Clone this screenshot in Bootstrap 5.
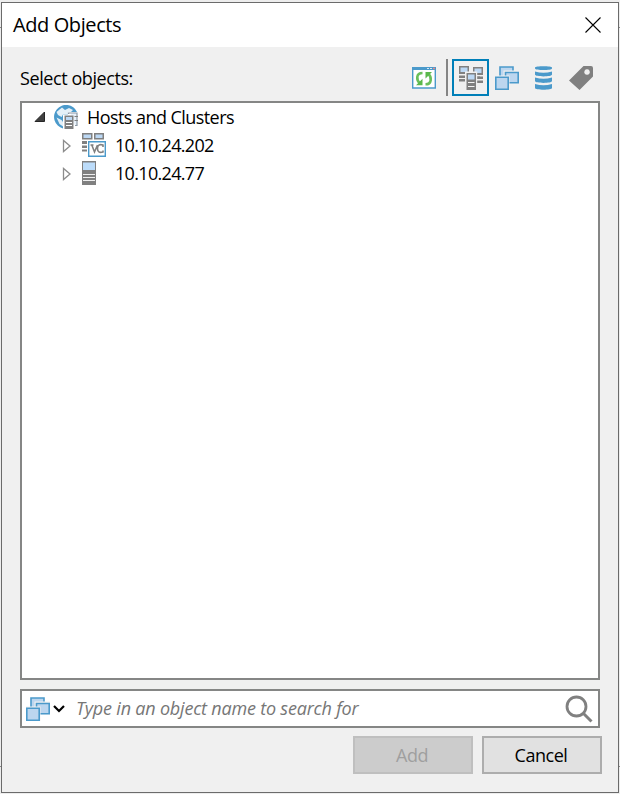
<!DOCTYPE html>
<html lang="en">
<head>
<meta charset="utf-8">
<meta name="viewport" content="width=device-width, initial-scale=1">
<title>Add Objects</title>
<link href="https://cdn.jsdelivr.net/npm/bootstrap@5.3.0/dist/css/bootstrap.min.css" rel="stylesheet">
<style>
html,body{height:100%}
body{font-family:"Open Sans","Noto Sans",sans-serif;font-size:18px;line-height:28px;color:#000;padding:2px 1px 1px;overflow:hidden;
background:linear-gradient(#ededed 27px,#8a8a8a 27px,#8a8a8a 28px,#ededed 28px,#ededed 766px,#8a8a8a 766px,#8a8a8a 767px,#ededed 767px)}
svg{display:block;flex:none}
.dialog{height:791px;background:#f0f0f0;border:1px solid #6b6b6b}
.titlebar{height:44px;padding:0 16px 0 11px}
.title{font-size:20px;letter-spacing:-.4px;padding-bottom:1px}
.close-x{background:none;border:0;padding:0 1px 1px 0}
.tools{height:54px;padding:12px 19px 0 18px}
.prompt{letter-spacing:-.42px;padding-top:5px}
.tool{width:37px;height:37px;border:2px solid transparent;background:none;padding:0}
.tool.active{border-color:#007fb8;margin-right:-1px}
.rule{width:2px;height:37px;background:#858585}
.frame{border:2px solid #858685;background:#fff;margin:0 18px}
.tree{height:579px;padding:0 0 0 12px;margin-bottom:9px}
.tree-row{height:28px}
.node{margin-left:9px;letter-spacing:-.56px}
.child{padding-left:27px}
.child .node{letter-spacing:-.68px}
.finder{height:39px;margin-bottom:8px;padding:0 5px 0 4px}
.finder input{border:0;outline:0;padding:0 0 2px;margin-left:9px;background:none;font-style:italic;letter-spacing:-.2px;min-width:0}
.finder input::placeholder{color:#767676;opacity:1}
.actions{padding-right:16px;gap:9px}
.cmd{width:120px;height:38px;border:2px solid #adadad;background:#e1e1e1;padding:0 2px 0 0;letter-spacing:-.45px;color:#000}
.cmd:disabled{background:#ccc;border-color:#bfbfbf;color:#9f9f9f}
</style>
</head>
<body>
<svg width="0" height="0" class="position-absolute" aria-hidden="true">
<defs>
<g id="vms">
<path d="M5 1h13v11H5z" fill="#bcd6ef" stroke="#4b9acb" stroke-width="1.6"/>
<path d="M8.500 4.500h16v13h-16z" fill="#f0f0f0"/>
<path d="M10.500 6.500h12.700v10.200H10.500z" fill="#bcd6ef" stroke="#4b9acb" stroke-width="1.6"/>
<path d="M-.5 9.500h15v15h-15z" fill="#f0f0f0"/>
<path d="M.8 11.200h12.400v12H.8z" fill="#bcd6ef" stroke="#4b9acb" stroke-width="1.6"/>
</g>
<g id="server"><path d="M0 0h10v8H0zM0 9.500h7V12H0zM0 13h7v2.500H0z" fill="#808080"/><path d="M1.500 1.500h7V6h-7z" fill="#bcd8f4"/></g>
</defs>
</svg>
<main class="dialog">
<header class="titlebar bg-white d-flex align-items-center justify-content-between">
<span class="title">Add Objects</span>
<button class="close-x" aria-label="Close"><svg width="16" height="16"><path d="M.5.5l15 15M15.500.5l-15 15" stroke="#000" stroke-width="1.1"/></svg></button>
</header>
<div class="tools d-flex align-items-start">
<span class="prompt me-auto">Select objects:</span>
<button class="tool d-flex align-items-center justify-content-center me-1" aria-label="Refresh"><svg width="24" height="22"><path d="M.7 1h22.600v20H.7z" fill="#fff" stroke="#4b9acb" stroke-width="1.4"/><path d="M0 0h24v3H0z" fill="#4b9acb"/><path d="M15 1.500h2M18 1.500h2" stroke="#d8e9f5"/><path d="M21 1.500h2" stroke="#e58787" stroke-width="1.5"/><path d="M10.500 6C4 6 4 13 8 16.500M13.500 17.300C20 17.300 20 10 16 6.500" fill="none" stroke="#6abf5b" stroke-width="2.600"/><path d="M4 18.300h6.500v-6.500zM13.500 5h6.500l-6.500 6.500z" fill="#5ab84b"/></svg></button>
<span class="rule me-1"></span>
<button class="tool active d-flex align-items-center justify-content-center" aria-label="Hosts"><svg width="24" height="24"><use href="#server"/><use href="#server" x="14" y="1"/><path d="M14 11h10v5.500H14z" fill="#f0f0f0"/><path d="M17 10.500h7V13h-7zM17 14.500h7V17h-7z" fill="#808080"/><path d="M6 5.500h12.200V24H6z" fill="#f0f0f0"/><path d="M7.500 7H17v17H7.500z" fill="#808080"/><path d="M9 8.500h6.500v5H9z" fill="#bcd8f4"/><path d="M9 16.500h6.500M9 20.500h6.500" stroke="#f5f5f5"/></svg></button>
<button class="tool d-flex align-items-center justify-content-center" aria-label="Virtual machines"><svg width="24" height="24"><use href="#vms"/></svg></button>
<button class="tool d-flex align-items-center justify-content-center" aria-label="Datastores"><svg width="18" height="24" fill="#4b9acb"><path d="M0 1.500C0-.2 17-.2 17 1.500V2.500C17 4.500 0 4.500 0 2.500zM0 5.500Q8.500 8 17 5.500V8.500C17 11 0 11 0 8.500zM0 11.500Q8.500 14 17 11.500V15C17 17.500 0 17.500 0 15zM0 18Q8.500 20.500 17 18V22C17 24.300 0 24.300 0 22z"/></svg></button>
<button class="tool d-flex align-items-center justify-content-center" aria-label="Tags"><svg width="24" height="24"><path fill-rule="evenodd" d="M14.500 0H22q2 0 2 2v8.500L10.500 24 0 14.500zM18 3.200a2.800 2.800 0 1 0 .1 0z" fill="#808080"/></svg></button>
</div>
<section class="frame tree">
<div class="tree-row d-flex align-items-center"><svg class="me-2" width="12" height="12"><path d="M10.500 1v9.500H1z" fill="#404040" stroke="#262626"/></svg>
<svg width="24" height="24"><path d="M23 7A12 12 0 1 0 9 23.500V9.500h5V7z" fill="#4b9acb"/><path d="M8 2.500l3 2.500 4-2 4 2-2 2h-3v2.500H9L7.500 12 4 10 2.500 7zM2.500 12.500l5 2.500 1.500 2v4.500L5.500 19z" fill="#e4f0f8"/><path d="M16.500 8h6.500v12.500h-2M14.500 9V8h2" fill="#e8f1fa" stroke="#8b98a5" stroke-width="1.200"/><path d="M20.500 11.500H24M20.500 15.500H24" stroke="#808080"/><path d="M10.500 10.500h9V24h-9z" fill="#808080"/><path d="M12 12h6v3H12z" fill="#bcd8f4"/><path d="M12 17.500h6M12 20.500h6" stroke="#fff"/></svg><span class="node">Hosts and Clusters</span></div>
<div class="tree-row child d-flex align-items-center"><svg width="21" height="16"><path d="M2.500 3.500v11l6.500-5.500z" fill="#fff" stroke="#8c8c8c" stroke-width="1.300"/></svg>
<svg width="24" height="24"><path d="M0 0h10.500v6.500H0zM12 0h10v6.500H12zM0 8h5v3H0zM0 12.500h5v2.500H0zM0 16.500h5v2H0z" fill="#808080"/><path d="M1.500 1.500H9v3.500H1.500zM13.500 1.500h7v3.500h-7z" fill="#bcd8f4"/><path d="M6.700 8.800h16.600v14.400H6.700z" fill="#fff" stroke="#4b9acb" stroke-width="1.400"/><path d="M8.500 12h3M9.800 12l2.700 7 3-7M21 14v-2q-5.500-1.500-5.500 3.500t5.500 3.500v-1.500" fill="none" stroke="#808080" stroke-width="1.600"/></svg><span class="node">10.10.24.202</span></div>
<div class="tree-row child d-flex align-items-center"><svg width="21" height="16"><path d="M2.500 3.500v11l6.500-5.500z" fill="#fff" stroke="#8c8c8c" stroke-width="1.300"/></svg>
<svg width="24" height="24"><path d="M0 0h14v24H0z" fill="#808080"/><path d="M1 1.500h12V9H1z" fill="#bcdcfa"/><path d="M1 13.500h12M1 16.500h12M1 19.500h12" stroke="#eee"/></svg><span class="node">10.10.24.77</span></div>
</section>
<div class="frame finder d-flex align-items-center">
<svg width="24" height="24"><use href="#vms"/></svg><svg width="14" height="10" style="margin-left:3px"><path d="M1 2l5 5 5-5" fill="none" stroke="#000" stroke-width="2.200"/></svg>
<input class="flex-grow-1" placeholder="Type in an object name to search for" aria-label="Search">
<svg width="28" height="28"><circle cx="11.500" cy="11.500" r="9.500" fill="none" stroke="#808080" stroke-width="2.800"/><path d="M18.500 18.500l8 8" stroke="#808080" stroke-width="3"/></svg>
</div>
<div class="actions d-flex justify-content-end"><button class="cmd" disabled>Add</button><button class="cmd">Cancel</button></div>
</main>
<script src="https://cdn.jsdelivr.net/npm/bootstrap@5.3.0/dist/js/bootstrap.bundle.min.js"></script>
</body>
</html>
